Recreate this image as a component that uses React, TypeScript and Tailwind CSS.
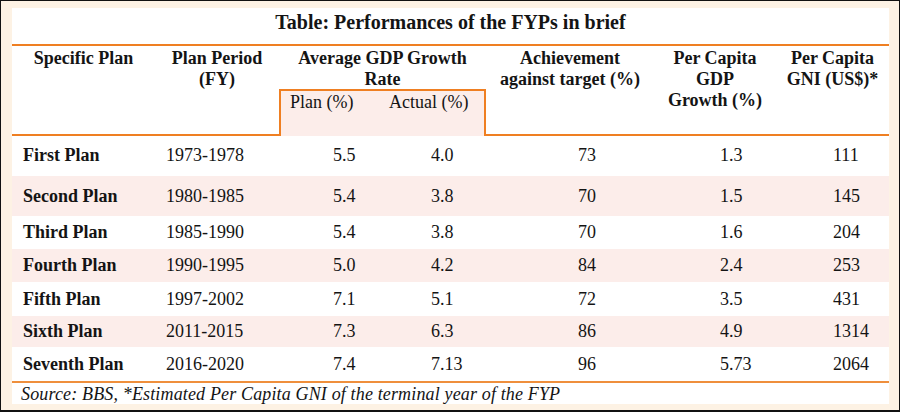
const rows = [
  ["First Plan", "1973-1978", "5.5", "4.0", "73", "1.3", "111"],
  ["Second Plan", "1980-1985", "5.4", "3.8", "70", "1.5", "145"],
  ["Third Plan", "1985-1990", "5.4", "3.8", "70", "1.6", "204"],
  ["Fourth Plan", "1990-1995", "5.0", "4.2", "84", "2.4", "253"],
  ["Fifth Plan", "1997-2002", "7.1", "5.1", "72", "3.5", "431"],
  ["Sixth Plan", "2011-2015", "7.3", "6.3", "86", "4.9", "1314"],
  ["Seventh Plan", "2016-2020", "7.4", "7.13", "96", "5.73", "2064"],
];

const heights = ["h-[40px]", "h-[41px]", "h-[33px]", "h-[33px]", "h-[34px]", "h-[31px]", "h-[34px]"];

// column widths + left padding for data cells
const cols = [
  "w-[143px] pl-[11px] font-bold",
  "w-[124px] pl-[11px]",
  "w-[101px] pl-[54px]",
  "w-[106px] pl-[51px]",
  "w-[168px] pl-[92px]",
  "w-[122px] pl-[66px]",
  "w-[113px] pl-[57px]",
];

function HeadCell({ w, children }: { w: string; children: React.ReactNode }) {
  return (
    <div className={`${w} border-b-2 border-[#ef7f22] pt-[2px] text-center font-bold`}>
      {children}
    </div>
  );
}

export default function App() {
  return (
    <div
      className="w-[900px] h-[412px] bg-[#fdf2e4] border border-b-2 border-[#111] pl-[11px] pr-[10px] pt-[7px] pb-[6px] text-[18px] leading-[21px] text-[#141414]"
      style={{ fontFamily: '"Liberation Serif", "Times New Roman", serif' }}
    >
      <div className="w-[877px] h-[396px] bg-white flex flex-col">
        <div className="h-[36px] pt-[3px] text-center text-[20px] leading-[22px] font-bold">
          Table: Performances of the FYPs in brief
        </div>
        <div className="h-[2px] bg-[#ef7f22]" />

        <div className="flex h-[90px]">
          <HeadCell w="w-[143px]">Specific Plan</HeadCell>
          <HeadCell w="w-[124px]">
            Plan Period
            <br />
            (FY)
          </HeadCell>
          <div className="w-[207px] flex flex-col">
            <div className="h-[43px] pt-[2px] text-center font-bold">
              Average GDP Growth
              <br />
              Rate
            </div>
            <div className="flex-1 flex border-t-2 border-x-2 border-[#ef7f22] bg-[#fcedea] pt-[1px]">
              <div className="w-[99px] pl-[9px]">Plan (%)</div>
              <div className="pl-[9px]">Actual (%)</div>
            </div>
          </div>
          <HeadCell w="w-[168px]">
            Achievement
            <br />
            against target (%)
          </HeadCell>
          <HeadCell w="w-[122px]">
            Per Capita
            <br />
            GDP
            <br />
            Growth (%)
          </HeadCell>
          <HeadCell w="w-[113px]">
            Per Capita
            <br />
            GNI (US$)*
          </HeadCell>
        </div>

        {rows.map((r, i) => (
          <div
            key={r[0]}
            className={`flex items-center ${heights[i]} ${i % 2 === 1 ? "bg-[#fcedea]" : "bg-white"}`}
          >
            {r.map((c, j) => (
              <div key={j} className={cols[j]}>
                {c}
              </div>
            ))}
          </div>
        ))}

        <div className="h-[2px] bg-[#ef8f3c]" />
        <div className="flex-1 pl-[9px] pt-[1px] italic leading-[20px] tracking-[0.15px]">
          Source: BBS, *Estimated Per Capita GNI of the terminal year of the FYP
        </div>
      </div>
    </div>
  );
}
